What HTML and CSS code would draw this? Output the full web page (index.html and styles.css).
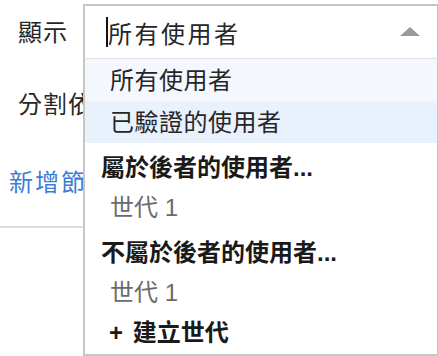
FILE: index.html
```html
<!DOCTYPE html>
<html lang="zh-Hant">
<head>
  <meta charset="UTF-8">
  <meta name="viewport" content="width=device-width, initial-scale=1.0">
  <title>顯示設定</title>
  <link rel="stylesheet" href="styles.css">
</head>
<body>
<div class="panel">
  <div class="row row-show">
    <span class="label">顯示</span>
    <div class="combo">
      <div class="select">
        <span class="value"><span class="caret"></span>所有使用者</span>
        <span class="arrow"></span>
      </div>
      <ul class="menu">
        <li class="option current">所有使用者</li>
        <li class="option hover">已驗證的使用者</li>
        <li class="group">屬於後者的使用者...</li>
        <li class="sub">世代 1</li>
        <li class="group">不屬於後者的使用者...</li>
        <li class="sub">世代 1</li>
        <li class="create">+ 建立世代</li>
      </ul>
    </div>
  </div>
  <div class="row row-split">
    <span class="label">分割依據</span>
  </div>
  <a class="add-link" href="#">新增節點</a>
</div>
<hr class="divider">
</body>
</html>
```

FILE: styles.css
```css
:root {
  --text: #262626;
  --muted: #6b6b6b;
  --blue: #3a7dd6;
  --border: #c6c6c6;
}
html, body {
  height: 100%;
}
body {
  margin: 0;
  font-family: "Liberation Sans", "Noto Sans CJK TC", sans-serif;
  color: var(--text);
  background: #fff;
}
.panel {
  padding-top: 4px;
}
.row {
  display: flex;
  align-items: flex-start;
}
.label {
  box-sizing: border-box;
  font-size: 24px;
  line-height: 32px;
  width: 83px;
  padding-left: 18px;
  flex-shrink: 0;
  white-space: nowrap;
  letter-spacing: 1px;
}
.row-show {
  height: 54px;
}
.row-show .label {
  margin-top: 13px;
}
.row-split .label {
  margin-top: 31px;
}
.combo {
  position: relative;
  flex: 1;
  z-index: 2;
}
.select {
  height: 52px;
  border: 2px solid var(--border);
  border-bottom: none;
  border-right-width: 1px;
  display: flex;
  align-items: center;
  justify-content: space-between;
  padding: 0 17px 0 21px;
  background: #fff;
}
.value {
  font-size: 24px;
  letter-spacing: 2.5px;
  display: flex;
  align-items: center;
}
.caret {
  display: inline-block;
  width: 2px;
  height: 30px;
  background: #111;
  margin-right: 0;
}
.arrow {
  width: 0;
  height: 0;
  border-left: 10px solid transparent;
  border-right: 10px solid transparent;
  border-bottom: 9px solid #9a9a9a;
  margin-top: -2px;
}
.menu {
  position: absolute;
  top: 100%;
  left: 0;
  right: 0;
  margin: 0;
  padding: 0;
  list-style: none;
  background: #fff;
  border: 2px solid var(--border);
  border-top: 1px solid #e2e2e2;
  border-right-width: 1px;
}
.menu li {
  font-size: 24px;
  line-height: 40px;
  white-space: nowrap;
}
.option {
  height: 42px;
  line-height: 44px !important;
  padding-left: 25px;
  letter-spacing: 0.5px;
}
.option.current {
  background: #f4f8fe;
}
.option.hover {
  background: #e9f1fd;
}
.group {
  font-weight: bold;
  padding: 5px 0 0 16px;
  color: #1a1a1a;
}
.sub {
  color: var(--muted);
  padding-left: 25px;
}
.create {
  font-weight: bold;
  padding-left: 24px;
  height: 41px;
  color: #1a1a1a;
  word-spacing: 3px;
}
.add-link {
  display: block;
  margin: 46px 0 27px 9px;
  font-size: 24px;
  line-height: 32px;
  letter-spacing: 2px;
  color: var(--blue);
  text-decoration: none;
  white-space: nowrap;
}
.divider {
  margin: 0;
  border: none;
  border-top: 2px solid #dedede;
}
```
